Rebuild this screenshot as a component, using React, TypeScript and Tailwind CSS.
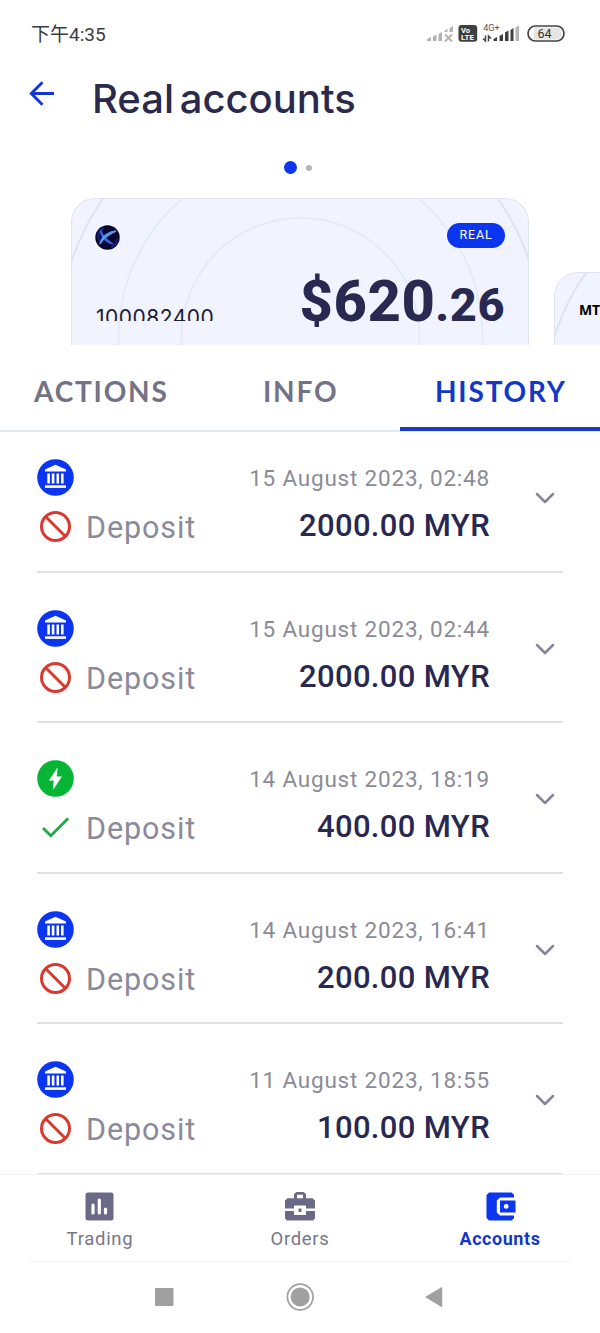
import { ChevronDown } from "lucide-react";

type Transaction = {
  date: string;
  amount: string;
  method: "bank" | "instant";
};

const transactions: Transaction[] = [
  { date: "15 August 2023, 02:48", amount: "2000.00 MYR", method: "bank" },
  { date: "15 August 2023, 02:44", amount: "2000.00 MYR", method: "bank" },
  { date: "14 August 2023, 18:19", amount: "400.00 MYR", method: "instant" },
  { date: "14 August 2023, 16:41", amount: "200.00 MYR", method: "bank" },
  { date: "11 August 2023, 18:55", amount: "100.00 MYR", method: "bank" },
];

function BankIcon() {
  return (
    <svg className="size-[37px]" viewBox="0 0 37 37">
      <circle cx="18.5" cy="18.5" r="18.3" fill="#0b35ee" />
      <g fill="#fff">
        <path d="M18.5 5.8 29 10.6v2H8v-2z" />
        <path d="M10.3 14.6h2.6v10h-2.6zM14.8 14.6h2.6v10h-2.6zM19.5 14.6h2.6v10h-2.6zM24 14.6h2.6v10H24z" />
        <path d="M8 26.3h21v2.6H8z" />
      </g>
    </svg>
  );
}

function InstantIcon() {
  return (
    <svg className="size-[37px]" viewBox="0 0 37 37">
      <circle cx="18.5" cy="18.5" r="18.3" fill="#06b534" />
      <path
        d="M20.2 8.4 12.4 20.3h4.7l-.8 8.8 8.2-12.3h-5z"
        fill="#fff"
        stroke="#fff"
        strokeWidth="0.6"
        strokeLinejoin="round"
      />
    </svg>
  );
}

function RejectedIcon() {
  return (
    <svg className="size-[31px]" viewBox="0 0 31 31" fill="none" stroke="#d93a30" strokeWidth="3">
      <circle cx="15.5" cy="15.5" r="14" />
      <path d="m5.5 5.5 20 20" />
    </svg>
  );
}

function DoneIcon() {
  return (
    <svg className="size-[31px]" viewBox="0 0 31 31" fill="none" stroke="#1faa46" strokeWidth="2.8">
      <path d="m3 16 7.8 7.800L28.200 6.200" />
    </svg>
  );
}

function StatusBar() {
  return (
    <div className="flex h-[68px] shrink-0 items-center justify-between pr-[35px] pl-[31px]">
      <span className="mt-px font-['Roboto','Noto_Sans_CJK_SC',sans-serif] text-[19px] leading-6 text-[#3c3c3c]">
        下午4:35
      </span>
      <svg className="h-[24px] w-[140px]" viewBox="425 22 140 24">
        {/* sim 1, no signal */}
        <g fill="#b4b4b4">
          <path d="M427 41v-2l4-2v4zM433 41v-4.500l3.500-2V41zM438.500 41v-7l3.500-2v9zM444.500 32v-1.500l3-1.500v3zM449.500 32v-4l3.500-2v6z" />
        </g>
        <path d="m445 34.500 7 7m0-7-7 7" stroke="#b4b4b4" strokeWidth="2" />
        <rect x="458.500" y="25" width="18.700" height="16.800" rx="3" fill="#3f3f3f" />
        <text x="461" y="32.700" fontSize="7.500" fontWeight="700" fill="#fff" className="font-['Roboto',sans-serif]">
          Vo
        </text>
        <text x="461" y="40.300" fontSize="8" fontWeight="700" fill="#fff" className="font-['Roboto',sans-serif]">
          LTE
        </text>
        {/* sim 2 */}
        <text x="483.300" y="30.700" fontSize="9" fill="#555" className="font-['Roboto',sans-serif]">
          4G+
        </text>
        <path d="M485.500 35.500V41l-2.500-2.500M488.500 41.500V36l2.500 2.500" fill="none" stroke="#444" strokeWidth="1.500" />
        <path d="M493.500 41v-2l3.500-2v4zM499.500 41v-5l3.500-2v7zM505 41v-8.500l3.500-2V41zM510.500 41V30l3-2v13z" fill="#3f3f3f" />
        <path d="M515.500 41V27.500l3.500-2V41z" fill="#b4b4b4" />
        <rect x="528" y="26" width="36" height="15" rx="7.500" fill="#fff" stroke="#454545" strokeWidth="1.700" />
        <path d="M534 27.500h23a5.500 6 0 0 1 5 6 5.500 6 0 0 1-5 6h-23z" fill="#e4e4e4" />
        <text x="544.500" y="38" fontSize="12.500" textAnchor="middle" fill="#333" className="font-['Roboto',sans-serif]">
          64
        </text>
      </svg>
    </div>
  );
}

// Decorative rings behind the card content
function CardRings() {
  return (
    <svg className="absolute top-0 left-0 h-[147px] w-[458px]" viewBox="0 0 458 147" fill="none" strokeWidth="2">
      <circle cx="228.500" cy="138" r="119" stroke="#e3ebf9" />
      <circle cx="228.500" cy="138" r="182" stroke="#e3ebf9" />
      <circle cx="228.500" cy="138" r="241" stroke="#dbe4f4" />
    </svg>
  );
}

function AccountCards() {
  return (
    <div className="flex h-[147px] shrink-0 items-end justify-between overflow-hidden pl-[71px]">
      <div className="relative h-full w-[458px] overflow-hidden rounded-t-[24px] border border-b-0 border-[#dfe4ef] bg-[#f1f4fe]">
        <CardRings />
        <div className="relative flex h-full flex-col justify-between pr-[23px] pb-[24px] pl-[23px]">
          <div className="flex justify-between pt-[23.500px]">
            <svg className="mt-[2px] size-[25px]" viewBox="0 0 25 25">
              <circle cx="12.500" cy="12.500" r="12.200" fill="#080430" />
              <path d="M5 16C1 11 4 5 9 3M16 22c4-1 6-4 6-8" stroke="#15247a" strokeWidth="2" fill="none" />
              <path d="M6 5c1 6 6 10 12 14-7-2-13-7-12-14z" fill="#3c7be8" stroke="#2f62d8" strokeWidth="1.500" />
              <path d="M21 6C14 6.500 7 11 5 19c3-6 8-9.500 16-13z" fill="#62b2f8" stroke="#529cf0" strokeWidth="1.500" />
            </svg>
            <span className="flex h-[25px] w-[58px] items-center justify-center rounded-full bg-[#0b35ee] font-['Roboto',sans-serif] text-[12.500px] tracking-[0.800px] text-white">
              REAL
            </span>
          </div>
          <div className="flex items-end justify-between">
            <span className="h-[14px] overflow-hidden pl-[1px] font-['Inter',sans-serif] text-[21px] leading-[22px] tracking-[0.500px] text-[#1c1b33]">
              100082400
            </span>
            <span className="-mb-[1px] h-[45px] font-['Roboto',sans-serif] text-[58px] leading-[48px] font-extrabold tracking-[0.500px] whitespace-nowrap text-[#282850]">
              $620<span className="text-[47px]">.26</span>
            </span>
          </div>
        </div>
      </div>
      <div className="relative h-[73px] w-[46px] overflow-hidden rounded-tl-[24px] border-t border-l border-[#dfe4ef] bg-[#f1f4fe]">
        <CardRings />
        <span className="relative block pt-[26px] pl-6 font-['Open_Sans',sans-serif] text-[14px] leading-[22px] font-bold tracking-[-0.300px] whitespace-nowrap text-black">
          MT
        </span>
      </div>
    </div>
  );
}

function TransactionRow({ date, amount, method }: Transaction) {
  return (
    <li className="flex h-[113.500px] shrink-0 border-b-2 border-[#dfe0e3] font-['Roboto',sans-serif]">
      <div className="w-[180px]">
        {method === "bank" ? <BankIcon /> : <InstantIcon />}
        <div className="mt-[14px] flex items-center pl-[3px]">
          {method === "bank" ? <RejectedIcon /> : <DoneIcon />}
          <span className="mt-[2px] ml-[15px] text-[30.500px] leading-[31px] tracking-[0.900px] text-[#8a8a9a]">
            Deposit
          </span>
        </div>
      </div>
      <div className="flex w-[273px] flex-col items-end whitespace-nowrap">
        <span className="mt-[6px] text-[22.500px] leading-[27px] tracking-[0.800px] text-[#8b8b98]">{date}</span>
        <span className="mt-[16px] text-[31px] leading-[36px] font-medium tracking-[0.350px] text-[#282850]">
          {amount}
        </span>
      </div>
      <ChevronDown className="mt-[23px] ml-[39px] size-[32px] text-[#85869a]" strokeWidth={1.900} />
    </li>
  );
}

function BottomNav() {
  return (
    <nav className="grid h-[87px] shrink-0 grid-cols-3 border-t border-[#f1f1f4] font-['Roboto',sans-serif] text-[18.500px] leading-6 tracking-[0.700px] text-[#77778a]">
      <div className="flex flex-col items-center pt-[17px]">
        <svg className="mr-[1px] size-[29px]" viewBox="0 0 29 29">
          <rect x="0.500" y="0.500" width="28" height="28" rx="2.500" fill="#6b6a86" />
          <path d="M8 13v8M14.300 8v13M20.500 17v4" stroke="#fff" strokeWidth="3.200" strokeLinecap="round" />
        </svg>
        <span className="mt-[6px]">Trading</span>
      </div>
      <div className="flex flex-col items-center pt-[17px]">
        <svg className="mr-[1px] h-[29px] w-[30px]" viewBox="0 0 30 29" fill="#6b6a86">
          <path
            fillRule="evenodd"
            d="M11.500 0h7L21 2v4.200h6.500L30 8.500v8h-9v-3H9v3H0v-8l2.500-2.300H9V2zm.5 2.800v3.400h6V2.800z"
          />
          <path d="M0 19h9v4h12v-4h9v7.500L28 28.500H2L0 26.500z" />
          <rect x="13.500" y="16.500" width="3" height="3.500" />
        </svg>
        <span className="mt-[6px]">Orders</span>
      </div>
      <div className="flex flex-col items-center pt-[17px] font-bold text-[#1437c8]">
        <svg className="ml-[1px] h-[29px] w-[30px]" viewBox="0 0 30 29">
          <path d="M3 .5h22.500l2.500 2.300v2.700H14l-3.200 3V20.500l3.200 3h14v2.700l-2.500 2.300H3L.5 26V3z" fill="#0b35ee" />
          <path fillRule="evenodd" d="M14 8.500h15.500v12H14zM20.200 12a2.400 2.400 0 1 0 0 4.800 2.400 2.400 0 0 0 0-4.800z" fill="#0b35ee" />
        </svg>
        <span className="mt-[6px] text-[18px] tracking-[0.550px]">Accounts</span>
      </div>
    </nav>
  );
}

export default function App() {
  return (
    <div className="flex h-[1333px] w-[600px] flex-col overflow-hidden bg-white">
      <StatusBar />

      <header className="flex h-[84px] shrink-0 pl-[29px]">
        <svg className="mt-[13px] size-[25px]" viewBox="0 0 25 25" fill="none" stroke="#1437d4" strokeWidth="2.900">
          <path d="M25 12.500H2.500M13.500 1.300 2.300 12.500l11.200 11.200" />
        </svg>
        <h1 className="mt-[7px] ml-[38px] font-['Inter',sans-serif] text-[40px] leading-[48px] font-medium whitespace-nowrap text-[#2b2a4c] [word-spacing:-5px]">
          Real accounts
        </h1>
      </header>

      {/* Carousel position */}
      <div className="flex h-[31px] shrink-0 items-center gap-[9px] pl-[284px]">
        <span className="size-[13px] rounded-full bg-[#0b35ee]" />
        <span className="size-[6px] rounded-full bg-[#b3b5c0]" />
      </div>
      <div className="h-[15px] shrink-0" />

      <AccountCards />

      <div className="grid h-[87px] shrink-0 grid-cols-3 border-b-2 border-[#e3e9f1] font-['Lato',sans-serif] text-[28px] leading-[92px] font-bold tracking-[1.800px] text-[#737286]">
        <span className="pl-[34px]">ACTIONS</span>
        <span className="pl-[63px]">INFO</span>
        <span className="h-[86px] border-b-4 border-[#1a3bc4] pl-[35px] text-[#1437c8]">HISTORY</span>
      </div>

      <ul className="flex h-[742px] shrink-0 flex-col gap-[37px] overflow-hidden px-[37px] pt-[27px]">
        {transactions.map((t) => (
          <TransactionRow key={t.date} {...t} />
        ))}
      </ul>

      <BottomNav />

      {/* System navigation */}
      <div className="mx-[29px] h-[71px] border-t border-[#f3f3f5]">
        <svg className="h-[71px] w-[542px]" viewBox="29 1262 542 71" fill="#a0a0a0">
          <rect x="155" y="1288" width="18.500" height="18" rx="1" />
          <circle cx="300.200" cy="1297" r="9.500" />
          <circle cx="300.200" cy="1297" r="12.800" fill="none" stroke="#a0a0a0" strokeWidth="1.700" />
          <path d="M425 1297 441.500 1287.200a.5.5 0 0 1 .7.500v18.700a.5.500 0 0 1-.7.500z" />
        </svg>
      </div>
    </div>
  );
}
